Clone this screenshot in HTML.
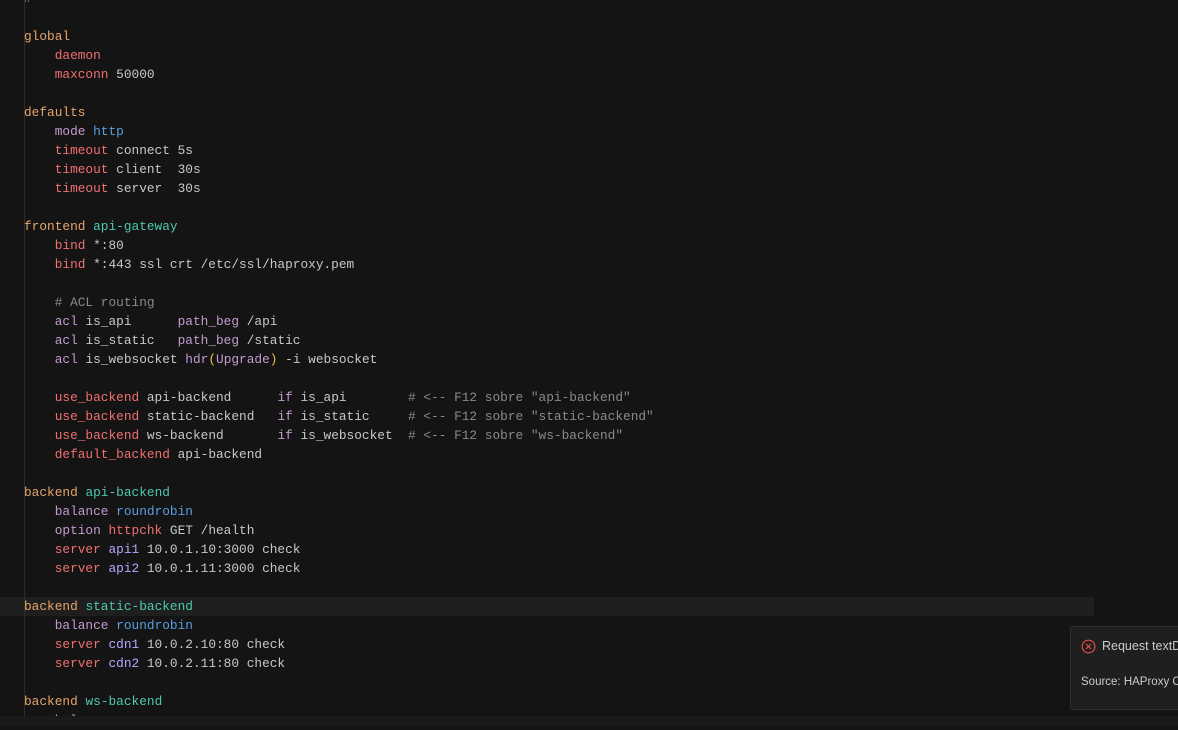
<!DOCTYPE html>
<html><head><meta charset="utf-8"><style>
html,body{margin:0;padding:0;background:#141414;width:1178px;height:720px;overflow:hidden;}
.guide{position:absolute;left:24px;top:0;width:1px;height:720px;background:#2c2c2c;}
.hl{position:absolute;left:0;top:597px;width:1094px;height:19px;background:#1f1f1f;}
pre{position:absolute;left:24px;top:-11px;margin:0;font-family:"Liberation Mono",monospace;font-size:12.8px;line-height:19px;color:#c8c8c8;}
.s{color:#e8a56a}.r{color:#f07070}.p{color:#c49bd0}.b{color:#5a9ee0}.t{color:#4ec9b0}.c{color:#8a8a8a}.v{color:#b9a6ff}.y{color:#f0c040}
.bot{position:absolute;left:0;top:716px;width:1178px;height:10px;background:#1a1a1a;z-index:5;}
.toast{position:absolute;left:1070px;top:626px;width:120px;height:82px;background:#1e1f1f;border:1px solid #2e2e2e;border-radius:3px;font-family:"Liberation Sans",sans-serif;color:#cccccc;font-size:12.5px;z-index:6;}
.toast .t1{position:absolute;left:31px;top:12px;white-space:nowrap;}
.toast .t2{position:absolute;left:10px;top:49px;font-size:11.5px;white-space:nowrap;}
.toast svg{position:absolute;left:10px;top:12px;}
</style></head><body>
<div class="hl"></div>
<div class="guide"></div>
<pre><span class="c">#</span>

<span class="s">global</span>
    <span class="r">daemon</span>
    <span class="r">maxconn</span> 50000

<span class="s">defaults</span>
    <span class="p">mode</span> <span class="b">http</span>
    <span class="r">timeout</span> connect 5s
    <span class="r">timeout</span> client  30s
    <span class="r">timeout</span> server  30s

<span class="s">frontend</span> <span class="t">api-gateway</span>
    <span class="r">bind</span> *:80
    <span class="r">bind</span> *:443 ssl crt /etc/ssl/haproxy.pem

    <span class="c"># ACL routing</span>
    <span class="p">acl</span> is_api      <span class="p">path_beg</span> /api
    <span class="p">acl</span> is_static   <span class="p">path_beg</span> /static
    <span class="p">acl</span> is_websocket <span class="p">hdr</span><span class="y">(</span><span class="p">Upgrade</span><span class="y">)</span> -i websocket

    <span class="r">use_backend</span> api-backend      <span class="p">if</span> is_api        <span class="c"># &lt;-- F12 sobre "api-backend"</span>
    <span class="r">use_backend</span> static-backend   <span class="p">if</span> is_static     <span class="c"># &lt;-- F12 sobre "static-backend"</span>
    <span class="r">use_backend</span> ws-backend       <span class="p">if</span> is_websocket  <span class="c"># &lt;-- F12 sobre "ws-backend"</span>
    <span class="r">default_backend</span> api-backend

<span class="s">backend</span> <span class="t">api-backend</span>
    <span class="p">balance</span> <span class="b">roundrobin</span>
    <span class="p">option</span> <span class="r">httpchk</span> GET /health
    <span class="r">server</span> <span class="v">api1</span> 10.0.1.10:3000 check
    <span class="r">server</span> <span class="v">api2</span> 10.0.1.11:3000 check

<span class="s">backend</span> <span class="t">static-backend</span>
    <span class="p">balance</span> <span class="b">roundrobin</span>
    <span class="r">server</span> <span class="v">cdn1</span> 10.0.2.10:80 check
    <span class="r">server</span> <span class="v">cdn2</span> 10.0.2.11:80 check

<span class="s">backend</span> <span class="t">ws-backend</span>
    <span class="p">balance</span></pre>
<div class="bot"></div>
<div class="toast">
<svg width="15" height="15" viewBox="0 0 16 16"><circle cx="8" cy="8" r="6.8" fill="none" stroke="#f14c4c" stroke-width="1.2"/><path d="M5.3 5.3L10.7 10.7M10.7 5.3L5.3 10.7" stroke="#f14c4c" stroke-width="1.2"/></svg>
<span class="t1">Request textDocument</span>
<span class="t2">Source: HAProxy Config</span>
</div>
</body></html>
